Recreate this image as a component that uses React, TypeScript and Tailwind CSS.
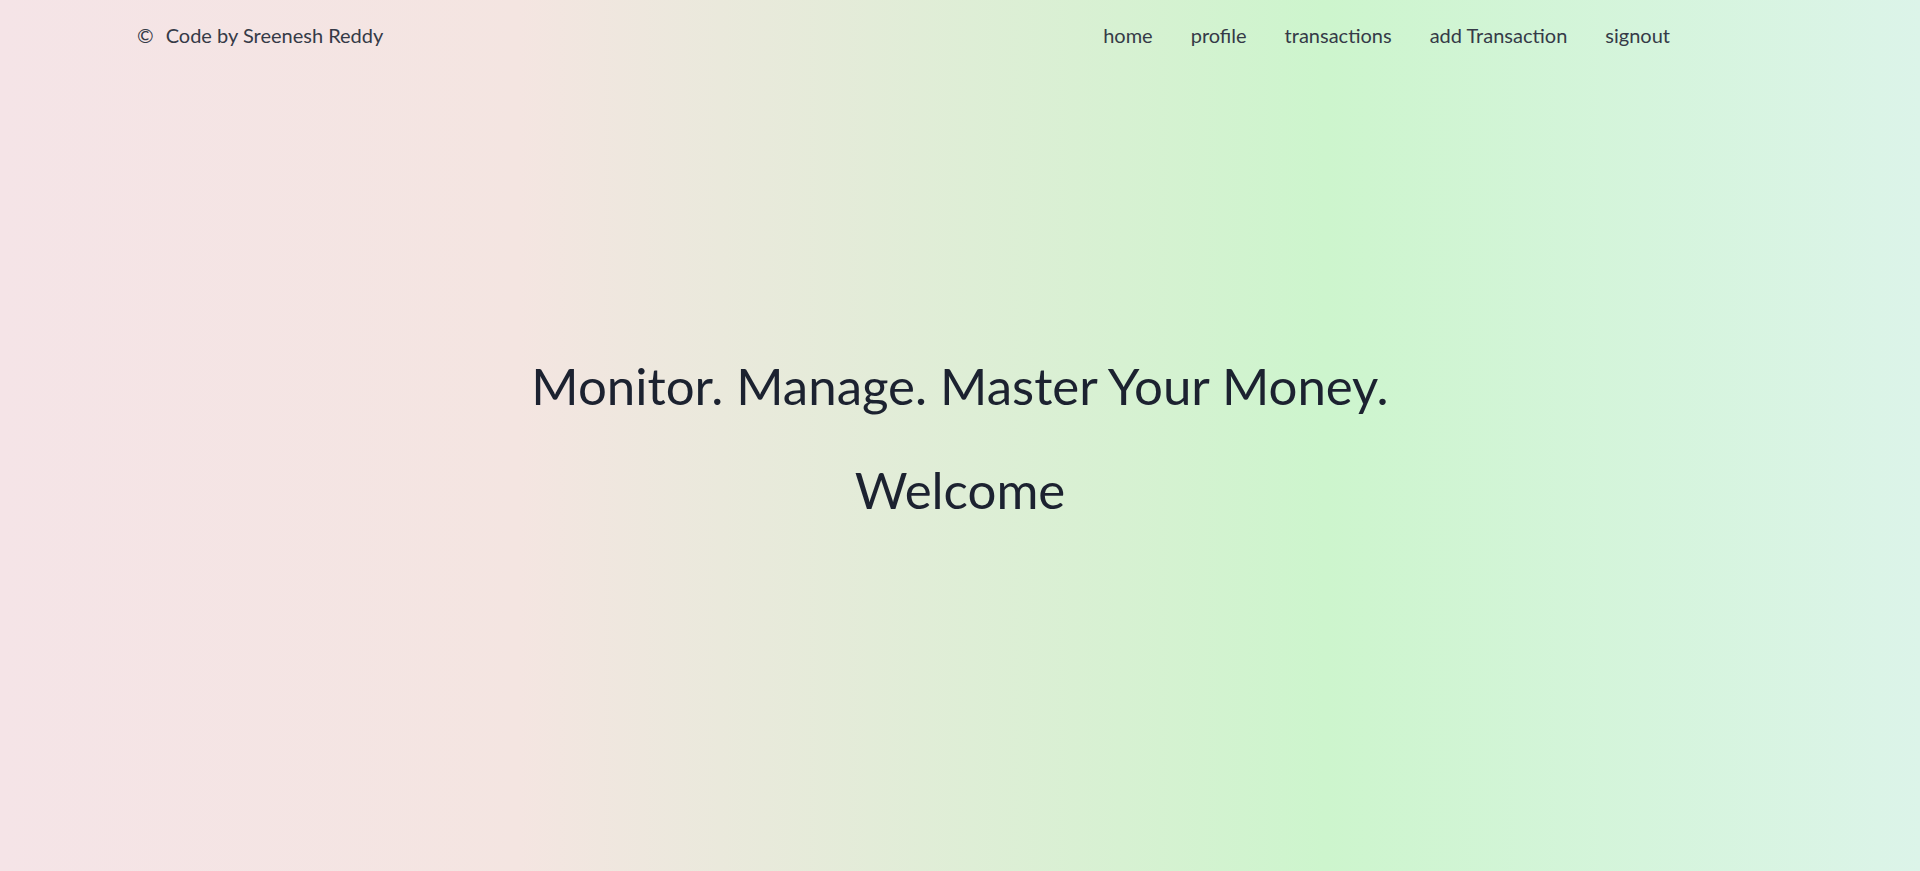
const links = ['home', 'profile', 'transactions', 'add Transaction', 'signout'];

const App = () => {
  return (
    <div
      className="min-h-screen w-full bg-[linear-gradient(to_right,#f5e4e7_0%,#f4e5e1_27%,#cdf5cd_69%,#dcf4e9_100%)] font-['Lato','Noto_Sans',sans-serif]"
    >
      <header className="flex h-[70px] items-center justify-between pl-[137px] pr-[250px] text-[20px] text-[#353a47]">
        <div className="flex items-center gap-3">
          <span>©</span>
          <span>Code by Sreenesh Reddy</span>
        </div>
        <nav className="flex items-center gap-[38px]">
          {links.map((l) => (
            <a key={l} href="#" className="hover:text-black">
              {l}
            </a>
          ))}
        </nav>
      </header>
      <main className="flex flex-col items-center pt-[290px] text-[#1c2230]">
        <h1 className="text-[51px] leading-none">Monitor. Manage. Master Your Money.</h1>
        <h2 className="mt-[53px] text-[51px] leading-none">Welcome</h2>
      </main>
    </div>
  );
};

export default App;
